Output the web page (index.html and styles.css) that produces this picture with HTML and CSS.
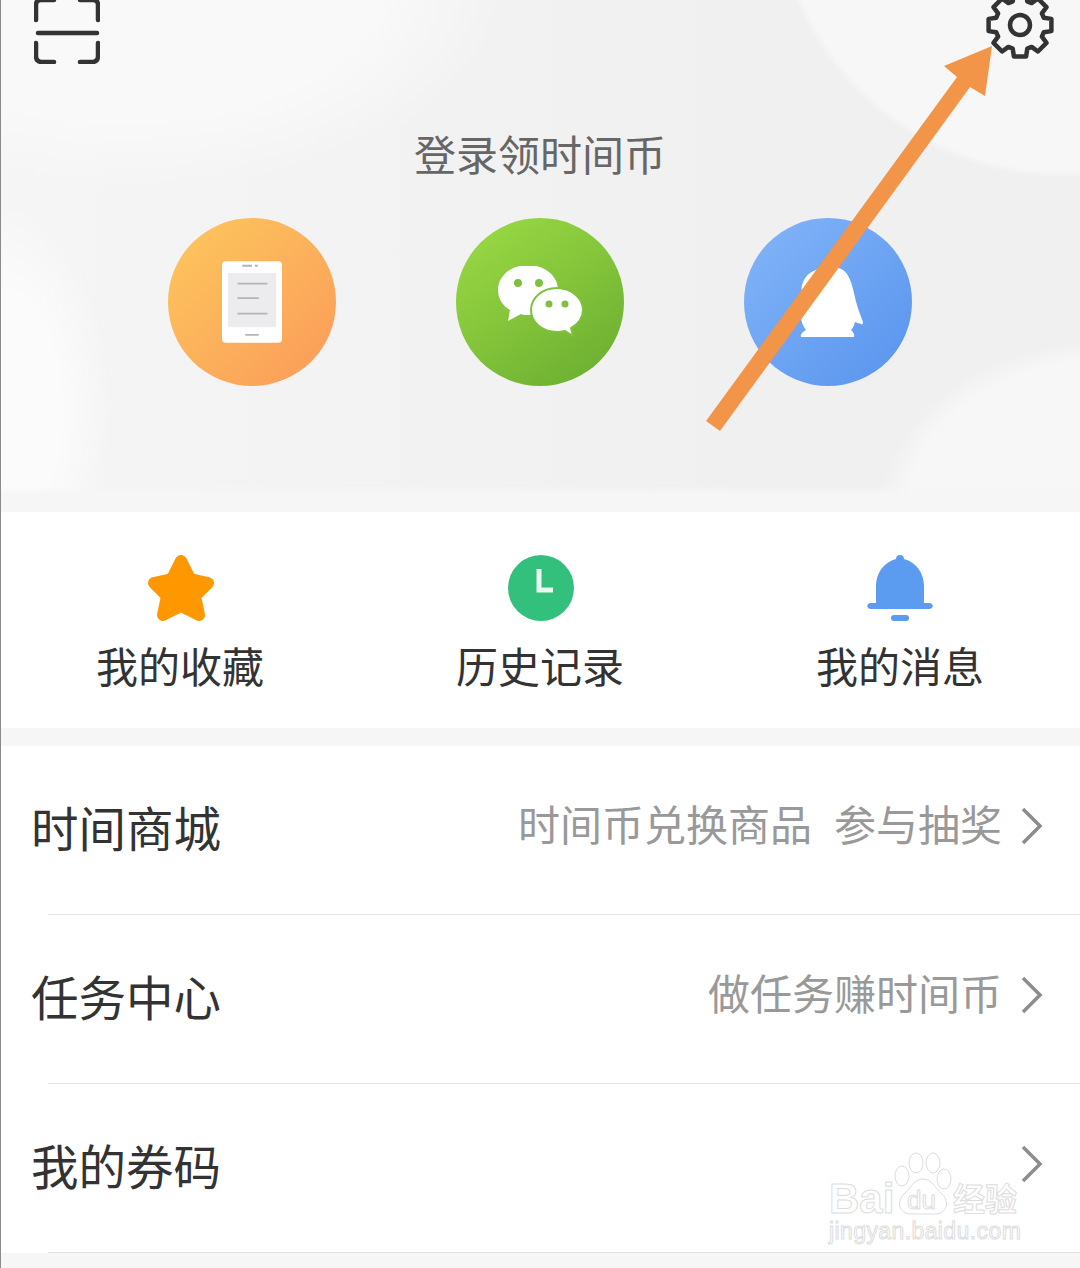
FILE: index.html
```html
<!DOCTYPE html>
<html lang="zh-CN">
<head>
  <meta charset="UTF-8">
  <title>我的</title>
  <link rel="stylesheet" href="styles.css">
</head>
<body>
  <div class="page">
    <section class="hero">
      <div class="topbar">
        <svg class="scan" viewBox="0 0 66 64" width="66" height="64">
          <path d="M2 20V5Q2 0 7 0H20M46 0H59Q64 0 64 5V20M2 43V56Q2 62 8 62H20M46 62H58Q64 62 64 56V43" />
          <path d="M4 33H63" />
        </svg>
        <svg class="gear" viewBox="-35 -25 70 60" width="70" height="60">
          <polygon points="-7.3,-23.7 -6.1,-31.4 6.1,-31.4 7.3,-23.7 11.6,-21.9 17.9,-26.5 26.5,-17.9 21.9,-11.6 23.7,-7.3 31.4,-6.1 31.4,6.1 23.7,7.3 21.9,11.6 26.5,17.9 17.9,26.5 11.6,21.9 7.3,23.7 6.1,31.4 -6.1,31.4 -7.3,23.7 -11.6,21.9 -17.9,26.5 -26.5,17.9 -21.9,11.6 -23.7,7.3 -31.4,6.1 -31.4,-6.1 -23.7,-7.3 -21.9,-11.6 -26.5,-17.9 -17.9,-26.5 -11.6,-21.9" />
          <circle r="10" />
        </svg>
      </div>
      <h2 class="hero-title">登录领时间币</h2>
      <div class="logins">
        <div class="login login-phone">
          <svg viewBox="0 0 62 84" width="60" height="84">
            <rect x="0" y="0" width="62" height="84" rx="4" fill="#fff" />
            <rect x="6" y="12" width="50" height="56" fill="#ececee" />
            <path d="M21 4.500H31M34 4.500H37M16 23H47M16 38H38M16 54H47M24 76H38" stroke="#b4b4b4" stroke-width="2" />
          </svg>
        </div>
        <div class="login login-wechat">
          <svg viewBox="0 0 88 72" width="88" height="72">
            <path d="M32 -1C15 -1 2 10 2 24C2 33 7 40 14 44L12 55L25 48C27 49 30 49 32 49C49 49 62 38 62 24C62 10 49 -1 32 -1Z" fill="#fff" />
            <path d="M61 22C46 22 35 32 35 44C35 56 46 66 61 66C64 66 67 65 69 65L77 70L75 62C82 58 87 52 87 44C87 32 75 22 61 22Z" fill="#fff" stroke="#7fc13f" stroke-width="2" />
            <circle cx="22" cy="17" r="4" fill="#7fc13f" />
            <circle cx="43" cy="17" r="4" fill="#7fc13f" />
            <circle cx="53" cy="38" r="3.500" fill="#7fc13f" />
            <circle cx="69" cy="38" r="3.500" fill="#7fc13f" />
          </svg>
        </div>
        <div class="login login-qq">
          <svg viewBox="0 0 72 72" width="72" height="72">
            <path d="M38 1C44 1 48 2 51 4C57 8 60 18 62 27C64 38 68 48 71 56C71 58 70 59 69 58L63 56C62 60 61 62 59 64C61 66 63 68 62 71H9C8 68 11 66 14 64C11 60 9 56 9 50C9 42 13 34 11 28C9 24 9 20 12 14C15 7 26 1 38 1Z" fill="#fff" />
          </svg>
        </div>
      </div>
      <svg class="arrow" viewBox="0 0 1080 512" width="1080" height="512">
        <polygon points="706,421 957,77 944,66 992,46 985,96 970,87 720,431" />
      </svg>
    </section>

    <section class="shortcuts">
      <div class="shortcut">
        <svg viewBox="0 0 68 68" width="68" height="68">
          <polygon points="35,6 44,24 62,28 49,41 53,60 35,51 17,60 21,41 8,28 26,24" fill="#ff9800" stroke="#ff9800" stroke-width="12" stroke-linejoin="round" />
        </svg>
        <span>我的收藏</span>
      </div>
      <div class="shortcut">
        <svg viewBox="0 0 68 68" width="68" height="68">
          <circle cx="35" cy="33" r="33" fill="#33c07d" />
          <path d="M33 14V35H47" fill="none" stroke="#e9f9f1" stroke-width="5" />
        </svg>
        <span>历史记录</span>
      </div>
      <div class="shortcut">
        <svg viewBox="0 0 68 68" width="68" height="68">
          <path d="M34 0C37 0 38 2 38 4C50 7 58 18 58 31V48H63C68 48 68 54 63 54H5C0 54 0 48 5 48H10V31C10 18 18 7 30 4C30 2 31 0 34 0Z" fill="#5b9bf0" />
          <rect x="25" y="60" width="18" height="6" rx="3" fill="#5b9bf0" />
        </svg>
        <span>我的消息</span>
      </div>
    </section>

    <section class="menu">
      <div class="menu-row">
        <span class="menu-title">时间商城</span>
        <span class="menu-note">时间币兑换商品<i class="note-gap"></i>参与抽奖</span>
        <svg class="chevron" viewBox="0 0 22 38" width="22" height="38"><path d="M2 2L19 19L2 36" /></svg>
      </div>
      <div class="menu-row">
        <span class="menu-title">任务中心</span>
        <span class="menu-note">做任务赚时间币</span>
        <svg class="chevron" viewBox="0 0 22 38" width="22" height="38"><path d="M2 2L19 19L2 36" /></svg>
      </div>
      <div class="menu-row">
        <span class="menu-title">我的券码</span>
        <svg class="chevron" viewBox="0 0 22 38" width="22" height="38"><path d="M2 2L19 19L2 36" /></svg>
      </div>
    </section>

    <div class="stamp">
      <svg class="paw" viewBox="0 0 60 66" width="60" height="66">
        <ellipse cx="9" cy="24" rx="7" ry="10" />
        <ellipse cx="23" cy="11" rx="7" ry="10" />
        <ellipse cx="40" cy="11" rx="7" ry="10" />
        <ellipse cx="51" cy="27" rx="7" ry="10" />
        <path d="M30 27C21 27 18 36 11 42C3 49 6 62 18 62H42C54 62 57 49 49 42C42 36 39 27 30 27Z" />
      </svg>
      <span class="stamp-bai">Bai</span>
      <span class="stamp-du">du</span>
      <span class="stamp-cn">经验</span>
      <span class="stamp-url">jingyan.baidu.com</span>
    </div>
  </div>
</body>
</html>
```

FILE: styles.css
```css
:root {
  --hero-bg: #f1f1f1;
  --page-bg: #f6f6f6;
  --title: #333;
  --note: #999;
  --line: #e2e2e2;
}

* {
  box-sizing: border-box;
}

body {
  margin: 0;
  background: var(--page-bg);
  font-family: "Noto Sans CJK SC", "Liberation Sans", sans-serif;
}

.page {
  position: relative;
  width: 1080px;
  height: 1268px;
  overflow: hidden;
}

/* thin dark edge down the left side */
.page::before {
  content: "";
  position: absolute;
  left: 0;
  top: 0;
  bottom: 0;
  z-index: 2;
  width: 1px;
  background: #8a8a8a;
}

/* header with the soft background blobs */
.hero {
  position: relative;
  height: 512px;
  background:
    linear-gradient(to bottom, transparent 486px, #f6f6f6 494px),
    radial-gradient(circle at 1062px -112px, #f7f7f7 282px, transparent 290px),
    radial-gradient(ellipse 380px 210px at 130px -20px, #f9f9f9 65%, transparent 100%),
    radial-gradient(ellipse 110px 210px at 0 410px, #fbfbfb 55%, transparent 100%),
    radial-gradient(ellipse 230px 170px at 1110px 510px, #f7f7f7 88%, transparent 100%),
    linear-gradient(to right, #f5f5f5, #f0f0f0 70%);
}

.topbar {
  display: flex;
  justify-content: space-between;
  align-items: flex-start;
  height: 64px;
  padding: 0 25px 0 34px;
}

.scan path {
  fill: none;
  stroke: #333;
  stroke-width: 4.500;
  stroke-linecap: round;
}

.gear polygon,
.gear circle {
  fill: none;
  stroke: #333;
  stroke-width: 4.500;
  stroke-linejoin: round;
}

.hero-title {
  margin: 59px 0 35px;
  height: 60px;
  line-height: 60px;
  text-align: center;
  font-size: 42px;
  font-weight: 400;
  color: #666;
}

.logins {
  display: flex;
  justify-content: center;
  gap: 120px;
}

.login {
  display: flex;
  align-items: center;
  justify-content: center;
  width: 168px;
  height: 168px;
  border-radius: 50%;
}

.login-phone {
  background: linear-gradient(135deg, #fdc85d, #fb9a59);
}

.login-wechat {
  background: linear-gradient(145deg, #9ddc45, #68ab2f);
}

.login-qq {
  background: linear-gradient(135deg, #84b5f8, #5794ee);
}

.arrow {
  position: absolute;
  left: 0;
  top: 0;
}

.arrow polygon {
  fill: #f29549;
}

.shortcuts {
  display: grid;
  grid-template-columns: repeat(3, 1fr);
  height: 216px;
  padding-top: 43px;
  background: #fff;
}

.shortcut {
  display: flex;
  flex-direction: column;
  align-items: center;
  color: var(--title);
  font-size: 42px;
  line-height: 60px;
}

.shortcut span {
  margin-top: 12px;
}

.menu {
  margin-top: 18px;
  background: #fff;
}

.menu-row {
  position: relative;
  display: flex;
  align-items: center;
  height: 169px;
  padding: 0 37px 8px 31px;
}

.menu-row::after {
  content: "";
  position: absolute;
  left: 48px;
  right: 0;
  bottom: 0;
  height: 1px;
  background: var(--line);
}

.menu-title {
  font-size: 47.500px;
  color: var(--title);
}

.menu-note {
  margin: 0 19px 8px auto;
  font-size: 42px;
  color: var(--note);
}

.note-gap {
  display: inline-block;
  width: 22px;
}

.chevron {
  flex: none;
  margin-bottom: 2px;
}

.menu-title + .chevron {
  margin-left: auto;
}

.chevron path {
  fill: none;
  stroke: #8c8c8c;
  stroke-width: 3.500;
}

/* watermark over the last row */
.stamp {
  position: absolute;
  left: 828px;
  top: 1150px;
  width: 200px;
  height: 100px;
  color: #fff;
  -webkit-text-stroke: 1px #ddd;
  font-family: "Liberation Sans", sans-serif;
  line-height: 1;
}

.stamp span {
  position: absolute;
  white-space: nowrap;
}

.paw {
  position: absolute;
  left: 65px;
  top: 2px;
}

.paw ellipse,
.paw path {
  fill: #fff;
  stroke: #ddd;
  stroke-width: 1;
}

.stamp-bai {
  left: 1px;
  top: 28px;
  font-size: 42px;
  font-weight: 700;
}

.stamp-du {
  left: 79px;
  top: 37px;
  font-size: 26px;
}

.stamp-cn {
  left: 125px;
  top: 31px;
  font-size: 32px;
  font-weight: 700;
  font-family: "Noto Sans CJK SC", sans-serif;
}

.stamp-url {
  left: 1px;
  top: 70px;
  font-size: 23px;
  letter-spacing: 0.400px;
}
```
